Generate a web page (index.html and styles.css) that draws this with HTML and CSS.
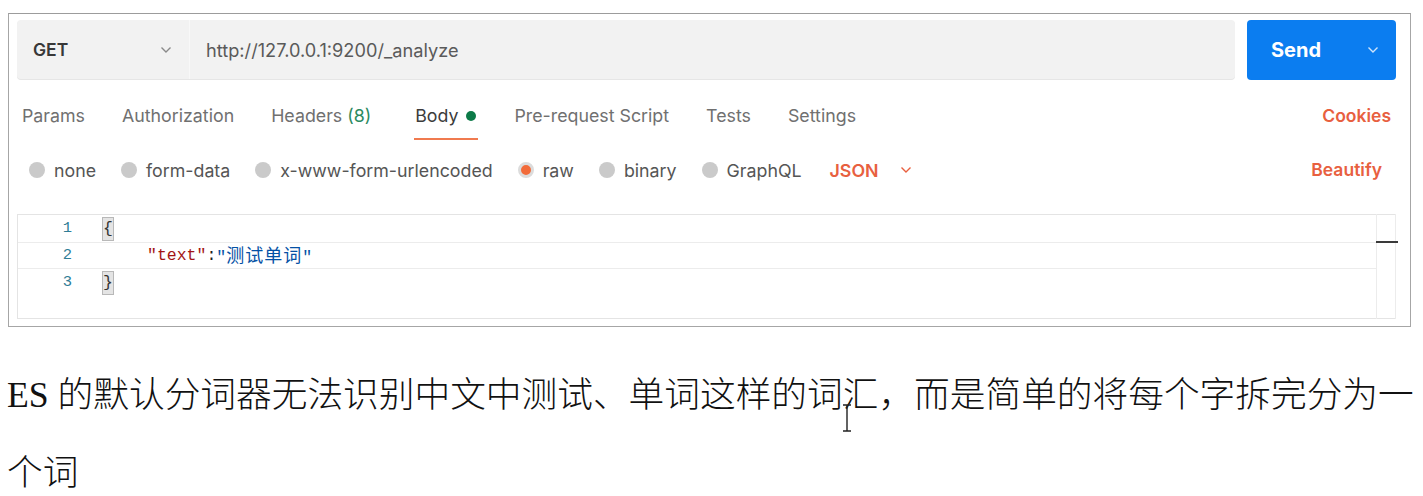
FILE: index.html
```html
<!DOCTYPE html>
<html lang="zh-CN">
<head>
<meta charset="utf-8">
<title>ES analyze</title>
<link rel="stylesheet" href="styles.css">
</head>
<body>
<div class="shot">
  <div class="url-row">
    <div class="urlbar">
      <div class="method">
        <span class="method-name">GET</span>
        <svg class="chev" width="12" height="8" viewBox="0 0 12 8"><path d="M1.5 1.5 L6 6 L10.5 1.5" fill="none" stroke="#8a8a8a" stroke-width="1.4"/></svg>
      </div>
      <div class="url">http://127.0.0.1:9200/_analyze</div>
    </div>
    <div class="send">
      <span class="send-label">Send</span>
      <svg class="send-chev" width="12" height="8" viewBox="0 0 12 8"><path d="M1.5 1.5 L6 6 L10.5 1.5" fill="none" stroke="#cfe4fb" stroke-width="1.4"/></svg>
    </div>
  </div>

  <div class="tabs">
    <span class="tab">Params</span>
    <span class="tab">Authorization</span>
    <span class="tab">Headers <span class="count">(8)</span></span>
    <span class="tab active">Body <span class="dot"></span></span>
    <span class="tab">Pre-request Script</span>
    <span class="tab">Tests</span>
    <span class="tab">Settings</span>
    <span class="tab-spacer"></span>
    <span class="link cookies">Cookies</span>
  </div>

  <div class="radios">
    <span class="radio"><span class="circle"></span>none</span>
    <span class="radio"><span class="circle"></span>form-data</span>
    <span class="radio"><span class="circle"></span>x-www-form-urlencoded</span>
    <span class="radio"><span class="circle on"></span>raw</span>
    <span class="radio"><span class="circle"></span>binary</span>
    <span class="radio"><span class="circle"></span>GraphQL</span>
    <span class="lang">JSON</span>
    <svg class="lang-chev" width="12" height="8" viewBox="0 0 12 8"><path d="M1.5 1.5 L6 6 L10.5 1.5" fill="none" stroke="#e8603f" stroke-width="1.4"/></svg>
    <span class="tab-spacer"></span>
    <span class="link beautify">Beautify</span>
  </div>

  <div class="editor">
    <div class="line">
      <span class="ln">1</span><span class="code"><span class="brk">{</span></span>
    </div>
    <div class="line current">
      <span class="ln">2</span><span class="code"><span class="guide"></span><span class="key">"text"</span>:<span class="str">"<span class="cjk">测试单词</span>"</span></span>
    </div>
    <div class="line">
      <span class="ln">3</span><span class="code"><span class="brk">}</span></span>
    </div>
    <div class="ruler"><span class="ruler-mark"></span></div>
  </div>
</div>

<p class="note">ES 的默认分词器无法识别中文中测试、单词这样的词汇，而是简单的将每个字拆完分为一个词</p>

<svg class="ibeam" width="10" height="28" viewBox="0 0 10 28"><path d="M1 1 H9 M5 1 V27 M1 27 H9" fill="none" stroke="#222" stroke-width="1.4"/></svg>
</body>
</html>
```

FILE: styles.css
```css
* { box-sizing: border-box; }

body {
  margin: 0;
  background: #ffffff;
  font-family: Inter, "Noto Sans", sans-serif;
  position: relative;
  width: 1423px;
  height: 496px;
  overflow: hidden;
}

.shot {
  margin: 13px 0 0 8px;
  width: 1403px;
  height: 314px;
  border: 1px solid #a6a6a6;
  border-top-color: #9c9c9c;
  padding: 6px 13px 0 8px;
  display: flex;
  flex-direction: column;
}

/* URL row */
.url-row {
  display: flex;
  height: 60px;
}

.urlbar {
  width: 1218px;
  height: 59px;
  background: #f2f2f2;
  border-radius: 4px;
  display: flex;
  align-items: center;
  box-shadow: 0 1px 0 #e6e6e6;
}

.method {
  width: 173px;
  height: 100%;
  display: flex;
  align-items: center;
  padding-left: 16px;
  border-right: 1px solid #f8f8f8;
}

.method-name {
  font-size: 17.5px;
  font-weight: 600;
  color: #383838;
  width: 127px;
}

.url {
  padding-left: 16px;
  font-size: 18.2px;
  color: #5a5a5a;
}

.send {
  margin-left: 12px;
  width: 149px;
  height: 60px;
  background: #0b7df0;
  border-radius: 4px;
  display: flex;
  align-items: center;
  padding-left: 24px;
}

.send-label {
  color: #ffffff;
  font-size: 20px;
  font-weight: 700;
  width: 96px;
}

/* tabs */
.tabs {
  display: flex;
  align-items: flex-start;
  padding-top: 24px;
  height: 72px;
  padding-left: 5px;
  gap: 37px;
}

.tab {
  font-size: 17.8px;
  line-height: 24px;
  color: #707070;
  height: 36px;
  padding-bottom: 10px;
  white-space: nowrap;
}

.tab.active {
  color: #3c3c3c;
  border-bottom: 2px solid #f07a4f;
  display: flex;
  align-items: center;
  height: 36px;
  padding: 0 0 10px 1px;
  margin-left: 6px;
  margin-right: -1px;
  align-self: flex-start;
}

.count { color: #2b8a60; }

.dot {
  display: inline-block;
  width: 10px;
  height: 10px;
  border-radius: 50%;
  background: #0c7a48;
  margin-left: 8px;
  margin-right: 2px;
}

.tab-spacer { flex: 1; }

.link {
  font-size: 17.5px;
  font-weight: 600;
  color: #e8603f;
  line-height: 24px;
}

.cookies { margin-right: 6px; }

/* radios */
.radios {
  display: flex;
  align-items: center;
  height: 24px;
  margin-top: 6px;
  padding-left: 12px;
}

.radio {
  display: flex;
  align-items: center;
  font-size: 17.8px;
  color: #555555;
  margin-right: 25px;
  white-space: nowrap;
}

.circle {
  width: 16px;
  height: 16px;
  border-radius: 50%;
  background: #cacaca;
  margin-right: 9px;
}

.circle.on {
  background: #f26b3a;
  border: 3px solid #dcdcdc;
}

.lang {
  font-size: 17.8px;
  font-weight: 600;
  color: #e8603f;
  margin-left: 3px;
  margin-right: 21px;
}

.beautify { margin-right: 15px; }

/* editor */
.editor {
  position: relative;
  margin-top: 32px;
  width: 1379px;
  height: 105px;
  border: 1px solid #e4e4e4;
  border-right: none;
  font-family: "Liberation Mono", "DejaVu Sans Mono", monospace;
  font-size: 16.5px;
}

.line {
  display: flex;
  height: 27px;
  line-height: 27px;
  align-items: center;
}

.line.current {
  border-top: 1px solid #ececec;
  border-bottom: 1px solid #ececec;
  margin-right: 20px;
}

.ln {
  width: 54px;
  text-align: right;
  color: #2f7d96;
  font-size: 15.5px;
  margin-right: 30px;
}

.code {
  color: #1e1e1e;
  white-space: pre;
  display: flex;
  align-items: center;
}

.brk {
  display: inline-block;
  background: #e4e4e4;
  border: 1px solid #b8b8b8;
  line-height: 22px;
  height: 24px;
  color: #333;
}

.guide {
  display: inline-block;
  width: 45px;
  height: 27px;
}

.key { color: #a31515; }
.str { color: #0451a5; }

.cjk {
  font-family: "Noto Sans CJK SC", sans-serif;
  font-size: 18px;
  letter-spacing: 1px;
}

.ruler {
  position: absolute;
  top: -1px;
  right: 0;
  width: 20px;
  height: 105px;
  border-left: 1px solid #ececec;
  border-right: 1px solid #ececec;
}

.ruler-mark {
  position: absolute;
  top: 27px;
  left: -1px;
  width: 22px;
  height: 2px;
  background: #3a3a3a;
}

/* note */
.note {
  margin: 29px 0 0 0;
  padding-left: 7px;
  width: 1423px;
  font-family: "Liberation Serif", "Noto Sans CJK SC", serif;
  font-size: 35.7px;
  font-weight: 300;
  line-height: 78px;
  color: #111111;
}

.ibeam {
  position: absolute;
  left: 842px;
  top: 404px;
}
```
